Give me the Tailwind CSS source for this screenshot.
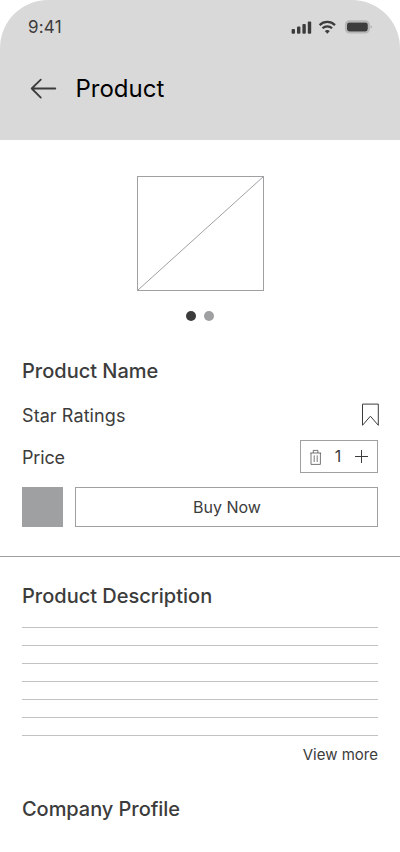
<!DOCTYPE html>
<html lang="en">
<head>
<meta charset="utf-8">
<meta name="viewport" content="width=device-width, initial-scale=1">
<title>Product</title>
<script src="https://cdn.jsdelivr.net/npm/@tailwindcss/browser@4"></script>
</head>
<body class="bg-white">
<div class="w-[400px] h-[852px] overflow-hidden bg-white text-[#3c3c3c] font-['Inter',sans-serif]">
  <header class="h-[140px] bg-[#d9d9d9] rounded-t-[48px] flex flex-col">
    <div class="h-[54px] pl-7 pr-7 flex items-center justify-between">
      <span class="text-[17px] leading-6 tracking-[0.2px]">9:41</span>
      <div class="flex items-center">
        <svg class="w-20 h-4 overflow-visible" viewBox="0 0 80 16" fill="#3c3c3c">
          <rect x="-.4" y="10.1" width="3.4" height="4.6" rx="1"/>
          <rect x="5" y="7.6" width="3.4" height="7.1" rx="1"/>
          <rect x="10.4" y="5" width="3.4" height="9.7" rx="1"/>
          <rect x="15.8" y="2.4" width="3.4" height="12.3" rx="1"/>
          <g fill="none" stroke="#3c3c3c" stroke-width="2.2">
            <path d="M27.6 6.1a11 11 0 0 1 15.4 0"/>
            <path d="M30.5 9.3a7 7 0 0 1 9.6 0"/>
          </g>
          <path d="M35.3 14.7 32.8 12a3.8 3.8 0 0 1 5 0z"/>
          <rect x="53.9" y="2.2" width="23" height="11.4" rx="3.5" fill="none" stroke="#3c3c3c" stroke-opacity=".22" stroke-width="2"/>
          <rect x="55" y="3.4" width="20.8" height="9" rx="2.3"/>
          <path d="M78.7 6.2v3.4a1.9 1.9 0 0 0 0-3.4z" fill-opacity=".35"/>
        </svg>
      </div>
    </div>
    <div class="h-[70px] pl-[30px] flex items-center">
      <svg class="w-[27px] h-[22px]" viewBox="0 0 27 22" fill="none" stroke="#3c3c3c" stroke-width="1.8" stroke-linecap="round" stroke-linejoin="round"><path d="M25.3 10.5H1.7M10.8 1.6 1.7 10.5 10.8 19.6"/></svg>
      <h1 class="ml-[18.5px] text-2xl text-black">Product</h1>
    </div>
  </header>

  <main>
    <section class="h-[417px] border-b border-[#9fa0a2] px-[22px] pt-9">
      <div class="mx-auto w-[127px] h-[115px] border border-[#9fa0a2]">
        <svg class="w-full h-full" viewBox="0 0 125 113" stroke="#9fa0a2"><path d="M0 113 125 0"/></svg>
      </div>
      <div class="mt-5 flex justify-center gap-2">
        <span class="size-2.5 rounded-full bg-[#3c3c3c]"></span>
        <span class="size-2.5 rounded-full bg-[#9fa0a2]"></span>
      </div>
      <h2 class="mt-9 text-xl leading-7 font-medium">Product Name</h2>
      <div class="mt-4 h-7 flex items-center justify-between">
        <span class="pt-0.5 text-lg tracking-[0.08px]">Star Ratings</span>
        <svg class="w-[17px] h-6 -mr-px" viewBox="0 0 17 24" fill="none" stroke="#3c3c3c"><path d="M.5 1.1h15.8V22.3L8.4 13.2.5 22.3z"/></svg>
      </div>
      <div class="mt-[11px] h-[33px] flex items-center justify-between">
        <span class="pt-0.5 text-lg tracking-[-0.15px]">Price</span>
        <div class="w-[78px] h-[33px] border border-[#9fa0a2] flex items-center pl-[9px]">
          <svg class="w-3 h-4" viewBox="0 0 12 16" fill="none" stroke="#3c3c3c" stroke-width=".7"><path d="M.3 4h10.8M3.3 4V1.4h4.6V4M1 4v11.4h9.4V4M4.2 6.4v6.6M7.2 6.4v6.6"/></svg>
          <span class="ml-3 w-2 pb-px text-center text-base">1</span>
          <svg class="ml-[13px] w-[13px] h-[13px]" viewBox="0 0 13 13" stroke="#3c3c3c"><path d="M6.5 0v13M0 6.5h13"/></svg>
        </div>
      </div>
      <div class="mt-3.5 flex gap-3">
        <div class="w-[41px] h-10 bg-[#9fa0a2]"></div>
        <button class="flex-1 h-10 pl-px border border-[#9fa0a2] text-base">Buy Now</button>
      </div>
    </section>

    <section class="px-[22px] pt-[25px]">
      <h2 class="text-xl leading-7 font-medium">Product Description</h2>
      <div class="mt-[17px] flex flex-col gap-[17px]">
        <div class="h-px bg-[#c2c2c2]"></div>
        <div class="h-px bg-[#c2c2c2]"></div>
        <div class="h-px bg-[#c2c2c2]"></div>
        <div class="h-px bg-[#c2c2c2]"></div>
        <div class="h-px bg-[#c2c2c2]"></div>
        <div class="h-px bg-[#c2c2c2]"></div>
        <div class="h-px bg-[#c2c2c2]"></div>
      </div>
      <div class="mt-[7px] text-right text-[15px] leading-6">View more</div>
      <h2 class="mt-7 text-xl leading-7 font-medium tracking-[-0.05px]">Company Profile</h2>
    </section>
  </main>
</div>
</body>
</html>
